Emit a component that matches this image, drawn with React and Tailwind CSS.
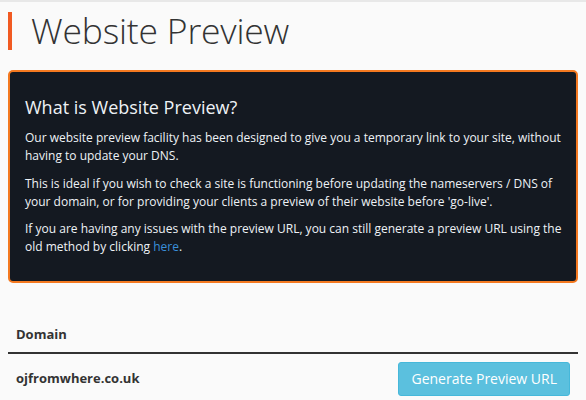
export default function App() {
  return (
    <div className="min-h-screen bg-[#fafafa] font-['Open_Sans',sans-serif] text-[#333] border-t-2 border-[#e8e8e8]">
      <div className="px-2">
        {/* Page title */}
        <div className="flex items-center h-[56px] pt-[2px]">
          <div className="w-[4px] h-[38px] bg-[#f15a22]" />
          <h1 className="ml-[19px] text-[35.5px] font-light leading-none text-[#333] tracking-[-0.2px]">Website Preview</h1>
        </div>

        {/* Info box */}
        <div className="mt-[12px] rounded-[5px] border-2 border-[#f47920] bg-[#141921] pl-[15px] pr-[12px] pt-[23px] pb-[25px] text-[12px] leading-[18px] text-[#eef2f6]">
          <h2 className="text-[18px] leading-[24px] font-normal mb-[10px]">What is Website Preview?</h2>
          <p className="mb-[10px]">
            Our website preview facility has been designed to give you a temporary link to your site, without having to update your DNS.
          </p>
          <p className="mb-[9px]">
            This is ideal if you wish to check a site is functioning before updating the nameservers / DNS of your domain, or for providing your clients a preview of their website before 'go-live'.
          </p>
          <p>
            If you are having any issues with the preview URL, you can still generate a preview URL using the old method by clicking <a className="text-[#3a8fd9]">here</a>.
          </p>
        </div>

        {/* Table */}
        <div className="mt-[42px]">
          <div className="px-[8px] pb-[7px] text-[13px] font-bold">Domain</div>
          <div className="h-[2px] bg-[#333]" />
          <div className="flex items-center justify-between pl-[8px] pr-[8px] py-[8px]">
            <span className="text-[13px] font-bold">ojfromwhere.co.uk</span>
            <button className="h-[34px] px-[12px] rounded-[3px] bg-[#5bc0de] border border-[#46b8da] text-white text-[14px]">
              Generate Preview URL
            </button>
          </div>
        </div>
      </div>
    </div>
  )
}
